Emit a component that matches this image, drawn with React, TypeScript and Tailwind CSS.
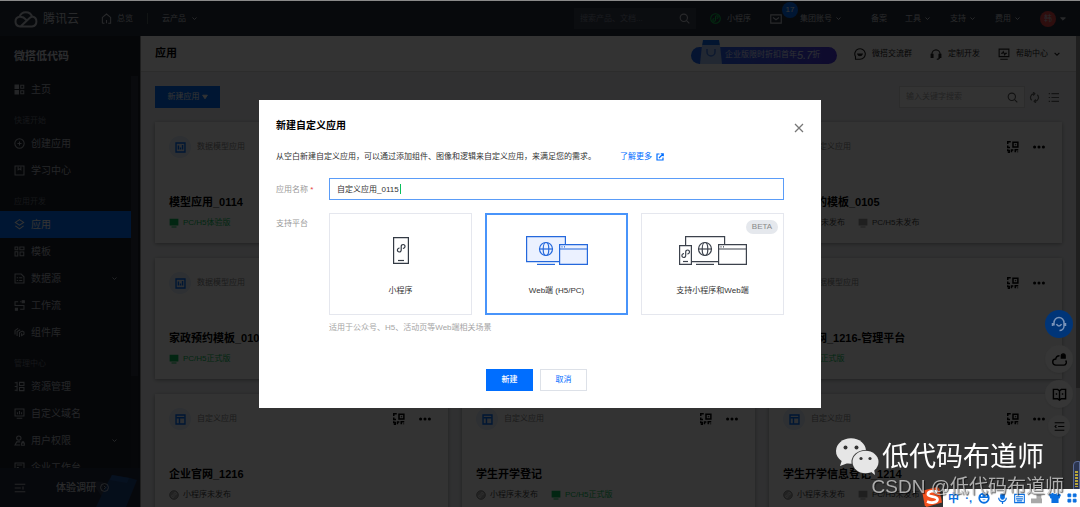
import React, { useState } from 'react';

type IconProps = { className?: string; children?: React.ReactNode; box?: string; width?: number };

function Svg({ className = 'size-3', children, box = '0 0 16 16', width = 1.5 }: IconProps) {
  return (
    <svg viewBox={box} className={`shrink-0 ${className}`} fill="none" stroke="currentColor" strokeWidth={width} aria-hidden="true">
      {children}
    </svg>
  );
}

const Chevron = ({ className = 'size-[5px]' }: { className?: string }) => (
  <Svg className={className} box="0 0 10 10" width={2}><path d="M1 3l4 4 4-4" /></Svg>
);
const SearchIcon = ({ className = 'size-[11px]' }: { className?: string }) => (
  <Svg className={className} width={1.6}><circle cx="7" cy="7" r="5.3" /><path d="M11 11l4 4" /></Svg>
);
const MiniGlyph = () => (
  <path d="M6.2 8.2a1.9 1.9 0 1 0 1.8 1.9V5.9A1.9 1.9 0 1 1 9.8 7.8" />
);

const icons: Record<string, React.ReactNode> = {
  home: <><path d="M1.5 1.5h5v5h-5zM1.5 9.5h5v5h-5z" fill="currentColor" /><path d="M9.8 1.8h4.4v4.4H9.8zM9.8 9.8h4.4v4.4H9.8z" /></>,
  plus: <><circle cx="8" cy="8" r="6.8" /><path d="M8 5v6M5 8h6" /></>,
  book: <><path d="M1.5 1.5h13v13h-13z" /><path d="M6 2v5l2-1.5L10 7V2" /></>,
  layers: <><path d="M8 1l6 4-6 4-6-4z" /><path d="M2 10l6 4.500 6-4.500" /></>,
  template: <><path d="M1.5 1.5h4v4h-4zM8.5 1.5h6v4h-6zM1.5 8.5h4v6h-4zM8.8 8.8h5.4v5.4H8.8z" /></>,
  data: <><path d="M1.5 1.5h9l4 4v9h-13z" /><path d="M4 7h2M7.5 7H12M4 11h2M7.5 11H12" /></>,
  flow: <><path d="M6 2.5H1.5V8h13v5.5H9M9 2.5h2" /><path d="M12 1h3v3h-3zM2 12h3v3H2z" fill="currentColor" /></>,
  parts: <><path d="M1.5 11V5L6 2M4.5 13V6.5L9 4M8 14.5V8l4-2 2.5 1.5v3L11 12.5V9" /></>,
  resource: <><path d="M4.500 1v14M1 2.500h3.500M1 8h3.500M1 13.500h3.500" /><path d="M8 2h6.500v4.500H8zM8 9.500h6.500V14H8z" /></>,
  domain: <><path d="M1.500 1.500h13v10h-13zM4 15h8" /><path d="M5 6v3M8 4.500V9M11 6v3" /></>,
  user: <><circle cx="7" cy="4.500" r="3.200" /><path d="M9 10H4l-2.500 4.500H9" /><path d="M11 11.500h4V15h-4zM12 11.500V10h2v1.500" /></>,
  desk: <><path d="M1.500 1.500h13v13h-13z" /><path d="M4 4.500h8M4 8h3" /></>,
};

const nav: { group?: string; items: { label: string; icon: string; active?: boolean; more?: boolean }[] }[] = [
  { items: [{ label: '主页', icon: 'home' }] },
  { group: '快速开始', items: [{ label: '创建应用', icon: 'plus' }, { label: '学习中心', icon: 'book' }] },
  {
    group: '应用开发',
    items: [
      { label: '应用', icon: 'layers', active: true },
      { label: '模板', icon: 'template' },
      { label: '数据源', icon: 'data', more: true },
      { label: '工作流', icon: 'flow' },
      { label: '组件库', icon: 'parts' },
    ],
  },
  {
    group: '管理中心',
    items: [
      { label: '资源管理', icon: 'resource' },
      { label: '自定义域名', icon: 'domain' },
      { label: '用户权限', icon: 'user', more: true },
      { label: '企业工作台', icon: 'desk' },
    ],
  },
];

type Status = { text: string; kind: 'pc' | 'pcOff' | 'mini' };
const apps: { type: string; name: string; model?: boolean; status: Status[] }[] = [
  { type: '数据模型应用', name: '模型应用_0114', model: true, status: [{ text: 'PC/H5体验版', kind: 'pc' }] },
  { type: '自定义应用', name: '自定义应用_0110', status: [{ text: '小程序未发布', kind: 'mini' }] },
  { type: '自定义应用', name: '我创建的模板_0105', status: [{ text: '小程序未发布', kind: 'mini' }, { text: 'PC/H5未发布', kind: 'pcOff' }] },
  { type: '数据模型应用', name: '家政预约模板_0104', model: true, status: [{ text: 'PC/H5正式版', kind: 'pc' }] },
  { type: '自定义应用', name: '家政预约', status: [{ text: '小程序未发布', kind: 'mini' }] },
  { type: '数据模型应用', name: '企业官网_1216-管理平台', model: true, status: [{ text: 'PC/H5正式版', kind: 'pc' }] },
  { type: '自定义应用', name: '企业官网_1216', status: [{ text: '小程序未发布', kind: 'mini' }] },
  { type: '自定义应用', name: '学生开学登记', status: [{ text: '小程序未发布', kind: 'mini' }, { text: 'PC/H5正式版', kind: 'pc' }] },
  { type: '自定义应用', name: '学生开学信息登记_1214', status: [{ text: '小程序未发布', kind: 'mini' }, { text: 'PC/H5未发布', kind: 'pcOff' }] },
];

function TopBar() {
  return (
    <header className="flex h-[35px] shrink-0 items-center bg-[#262f3e] px-3.5 text-[8px] text-[#c8ccd4]">
      <a href="#home" className="flex items-center gap-[5px] text-xs">
        <Svg className="h-[18px] w-6" box="0 0 24 18" width={2}>
          <path d="M6 16.500a4.900 4.900 0 0 1-.5-9.700A6.700 6.700 0 0 1 18.200 6.600a5 5 0 0 1-.2 9.900zM5.500 6.800c3-.3 5 1 6.800 3M6.500 16.500l7.500-7c1.500-1.500 2.500-2.500 4.500-2.900" />
        </Svg>
        腾讯云
      </a>
      <a href="#overview" className="ml-[22px] flex items-center gap-[5px]">
        <Svg className="size-[11px]"><path d="M2 15V6.500L8 1.500l6 5V15h-3.500M8 15v-5M2 15h3" /></Svg>
        总览
      </a>
      <span className="mx-3.5 h-[11px] w-px bg-[#566]" />
      <a href="#products" className="flex items-center gap-1.5">云产品<Chevron /></a>
      <label className="ml-auto flex h-[21px] w-[122px] items-center bg-[#3a4252] px-1.5">
        <input aria-label="搜索产品、文档" placeholder="搜索产品、文档..." className="w-0 flex-1 bg-transparent outline-none placeholder:text-[#80889a]" />
        <SearchIcon />
      </label>
      <a href="#mini" className="ml-3.5 flex items-center gap-1.5">
        <Svg className="size-[11px] text-[#0ad050]"><circle cx="8" cy="8" r="7" /><MiniGlyph /></Svg>
        小程序
      </a>
      <a href="#messages" aria-label="消息 17" className="relative ml-[19px]">
        <Svg className="size-3"><path d="M1 2.500h14v11H1z" /><path d="M4 6l4 3 4-3" /></Svg>
        <span className="absolute -top-[11px] left-3 flex size-4 items-center justify-center rounded-full bg-[#006eff] text-[8px] text-white">17</span>
      </a>
      <a href="#account" className="ml-[18px] flex items-center gap-1">集团账号<Chevron /></a>
      <a href="#record" className="ml-[30px]">备案</a>
      <a href="#tools" className="ml-[18px] flex items-center gap-1">工具<Chevron /></a>
      <a href="#support" className="ml-5 flex items-center gap-1">支持<Chevron /></a>
      <a href="#cost" className="ml-5 flex items-center gap-1">费用<Chevron /></a>
      <button className="ml-5 flex items-center gap-1">
        <span className="flex size-4 items-center justify-center rounded-full bg-[#e54545]">韩</span>
        <Svg className="size-[6px]" box="0 0 10 10"><path d="M1 3h8L5 7z" fill="currentColor" /></Svg>
      </button>
    </header>
  );
}

function SideBar() {
  return (
    <aside className="flex w-[140px] shrink-0 flex-col bg-[#1a1f29] text-[10px] text-[#b4b8c0]">
      <h2 className="flex h-10 shrink-0 items-center px-3.5 text-[11px] font-bold text-[#d8dce4]">微搭低代码</h2>
      <div className="flex min-h-0 flex-1">
        <nav className="min-w-0 flex-1 overflow-hidden">
          {nav.map((section, i) => (
            <div key={i}>
              {section.group && <h3 className="flex h-[27px] items-end px-3.5 pb-[3px] text-[8px] text-[#6c727e]">{section.group}</h3>}
              {section.items.map((item) => (
                <a
                  key={item.label}
                  href={`#${item.icon}`}
                  className={`flex h-[27px] items-center gap-1.5 px-3.5 ${item.active ? 'bg-[#006eff] text-white' : ''}`}
                >
                  <Svg className="size-[11px]">{icons[item.icon]}</Svg>
                  {item.label}
                  {item.more && <Chevron className="ml-auto size-[5px]" />}
                </a>
              ))}
            </div>
          ))}
        </nav>
        <div className="mr-0.5 w-[7px] bg-[#20242e]"><div className="h-[300px] bg-[#2e3442]" /></div>
      </div>
      <div className="relative flex h-[39px] shrink-0 items-center overflow-hidden bg-[#222b3f] px-3.5">
        <svg viewBox="0 0 50 39" className="absolute right-0 bottom-0 h-[39px] w-[50px]" aria-hidden="true">
          <path d="M1 13l12 1v16z" fill="#343f54" />
          <path d="M6 39L18 14l4-7 18 3 7 2-11 27z" fill="#1d4583" />
          <path d="M22 7l17 3-2 5-17-3z" fill="#22569f" />
        </svg>
        <Svg className="size-3"><path d="M1 3h14M1 13h14M1 8h8M12 6v4" /></Svg>
        <a href="#survey" className="relative ml-[30px] flex items-center gap-1 font-medium text-[#d0d4dc]">
          体验调研
          <Svg className="size-[9px]"><circle cx="8" cy="8" r="7" /><path d="M7 5l3 3-3 3" /></Svg>
        </a>
      </div>
    </aside>
  );
}

function StatusTag({ text, kind }: Status) {
  return (
    <span className={`flex items-center gap-1 ${kind === 'pc' ? 'text-[#0abf5b]' : 'text-[#444]'}`}>
      {kind === 'mini' ? (
        <Svg className="size-[10px] text-[#888]" width={1.4}><circle cx="8" cy="8" r="7" fill="#aaa" /><g stroke="#eee"><MiniGlyph /></g></Svg>
      ) : (
        <svg viewBox="0 0 16 16" className={`size-[10px] ${kind === 'pc' ? 'text-[#0abf5b]' : 'text-[#999]'}`} fill="currentColor" aria-hidden="true">
          <path d="M1 1h14v11H1zM4 13.500h8V15H4z" />
        </svg>
      )}
      {text}
    </span>
  );
}

function AppCard({ app }: { app: (typeof apps)[number] }) {
  return (
    <article className="flex h-[121px] flex-col bg-white px-3.5 pt-3.5 shadow-[0_1px_4px_rgba(0,0,0,0.35)]">
      <div className="flex items-center gap-1.5 text-[8px] text-[#888]">
        <span className="flex size-[22px] items-center justify-center rounded-full bg-[#e3edff] text-[#006eff]">
          <Svg className="size-[11px]" width={2}>
            <path d="M1.500 1.500h13v13h-13z" />
            {app.model ? <path d="M5 5v6M8 8v3M11 4.500V11" /> : <path d="M2 5.500h12M6.500 5.500V14" />}
          </Svg>
        </span>
        {app.type}
        <button aria-label="二维码" className="mr-2 ml-auto text-black">
          <Svg className="size-3" width={2}>
            <path d="M5 1H1v3M1 6v2.500h3M8 1.500h6.500V8H8zM1 11v1.500h2V15H1M6 15v-3h2.500M11 15v-3.500h4M14 14v1" />
            <path d="M11 4.500h.8v.8H11z" strokeWidth={1} />
          </Svg>
        </button>
        <button aria-label="更多" className="mr-[3px] text-black">
          <svg viewBox="0 0 15 5" className="h-1 w-3" fill="currentColor" aria-hidden="true">
            <circle cx="2" cy="2.500" r="1.900" /><circle cx="7.500" cy="2.500" r="1.900" /><circle cx="13" cy="2.500" r="1.900" />
          </svg>
        </button>
      </div>
      <h3 className="mt-9 text-[11px] leading-4 font-bold text-black">{app.name}</h3>
      <div className="mt-[7px] flex gap-[13px] text-[8px] leading-3">
        {app.status.map((s) => <StatusTag key={s.text} {...s} />)}
      </div>
    </article>
  );
}

function MainArea() {
  return (
    <main className="flex min-w-0 flex-1 border-l border-[#999] bg-[#f0f1f4]">
      <div className="flex min-w-0 flex-1 flex-col overflow-hidden">
        <div className="flex h-9 shrink-0 items-center border-b border-[#ddd] bg-white px-3.5 text-[8px] text-[#222]">
          <h1 className="text-[11px] font-bold text-black">应用</h1>
          <a href="#discount" className="relative mt-[3px] ml-auto flex h-[17px] w-[146px] items-center rounded-full bg-gradient-to-r from-[#1668f5] to-[#4a35e0] pl-[34px] text-[#dfe6ff]">
            <svg viewBox="0 0 22 24" className="absolute bottom-0 left-[9px] h-6 w-[22px]" aria-hidden="true">
              <path d="M3 0h16l1 6H2z" fill="#0a6cf0" />
              <path d="M2 5h18l2 19H0z" fill="#a9c6f7" />
              <path d="M7 9v3a4 4 0 0 0 8 0V9" fill="none" stroke="#3f7be8" strokeWidth="1.500" />
            </svg>
            企业版限时折扣首年<i className="text-[11px]">5.7</i>折
          </a>
          <a href="#group" className="ml-[17px] flex items-center gap-1.5">
            <Svg className="size-3"><path d="M2 15h6a7 7 0 1 0-6-3.500z" /><path d="M5 8c1 3 5 3 6 0z" fill="currentColor" /></Svg>
            微搭交流群
          </a>
          <a href="#custom" className="ml-[18px] flex items-center gap-1.5">
            <Svg className="size-3"><path d="M2.500 8.500a5.500 6 0 0 1 11 0M13 12c0 2-2 3-4 3" /><path d="M1.500 8.500H4v4H1.500zM12 8.500h2.500v4H12z" fill="currentColor" /></Svg>
            定制开发
          </a>
          <a href="#help" className="mr-0.5 ml-[18px] flex items-center gap-1.5">
            <Svg className="size-3"><path d="M1.500 1.500h13v10h-13zM3 15h10M4 7h2l1-2 2 4 1-2h2" /></Svg>
            帮助中心
            <Chevron className="size-[6px]" />
          </a>
        </div>
        <div className="flex shrink-0 items-center px-3.5 pt-3.5 text-[8px]">
          <button className="flex h-[22px] w-[65px] items-center justify-center gap-0.5 bg-[#006eff] text-white">
            新建应用
            <Svg className="size-[6px]" box="0 0 10 10"><path d="M1 2h8L5 8z" fill="currentColor" /></Svg>
          </button>
          <label className="ml-auto flex h-[22px] w-[126px] items-center border border-[#ddd] bg-white px-1.5 text-[#555]">
            <input aria-label="输入关键字搜索" placeholder="输入关键字搜索" className="w-0 flex-1 outline-none placeholder:text-[#aaa]" />
            <SearchIcon />
          </label>
          <button aria-label="刷新" className="ml-1 text-[#666]">
            <Svg className="size-[11px]" width={1.8}><path d="M7 2.500a5.500 5.500 0 0 0-3 9.500M9 13.500a5.500 5.500 0 0 0 3-9.500M6 0l2.500 2.500L6 5M10 11l-2.500 2.500L10 16" /></Svg>
          </button>
          <button aria-label="列表" className="mr-[3px] ml-2 text-[#666]">
            <Svg className="size-[11px]" width={1.8}><path d="M1 2.500h2M5 2.500h11M1 8h2M5 8h11M1 13.500h2M5 13.500h11" /></Svg>
          </button>
        </div>
        <div className="grid shrink-0 grid-cols-3 gap-x-3.5 gap-y-[15px] px-3.5 pt-3.5">
          {apps.map((app) => <AppCard key={app.name} app={app} />)}
        </div>
      </div>
      <div className="w-1 bg-[#d8d8d8]"><div className="h-[352px] bg-[#9a9a9a]" /></div>
    </main>
  );
}

const Globe = ({ cx, cy }: { cx: number; cy: number }) => (
  <g><circle cx={cx} cy={cy} r="6.500" /><ellipse cx={cx} cy={cy} rx="2.800" ry="6.500" /><path d={`M${cx - 6.5} ${cy}h13`} /></g>
);
const Phone = ({ tall }: { tall?: boolean }) => (
  <g>
    <path d={tall ? 'M.6 .6h14.800v25.800H.6z' : 'M.6 9.600h11.800v18.800H.6z'} fill="white" />
    <path d={tall ? 'M5 23.500h6' : 'M4 25.500h5'} />
    <path transform={tall ? 'translate(0 3)' : 'translate(-1.500 9.500)'} d="M6.500 8.200a1.900 1.900 0 1 0 1.700 1.900V6.400a1.900 1.900 0 1 1 1.700 1.900" />
  </g>
);

function PlatformArt({ kind }: { kind: string }) {
  if (kind === 'mini') return <Svg className="h-[28px] w-[16px] text-[#333a44]" box="0 0 16 28" width={1.2}><Phone tall /></Svg>;
  if (kind === 'web')
    return (
      <Svg className="h-[30px] w-[62px] text-[#2468dc]" box="0 0 62 30" width={1.2}>
        <path d="M.6 .6h38.800v25H.6z" fill="#ebf1ff" /><path d="M11 28.400h18" /><Globe cx={20} cy={13} />
        <path d="M33.600 8.600h27.800v19.800H33.600z" fill="#ebf1ff" /><path d="M33.600 13h27.800M35.500 10.800h1M38 10.800h1" />
      </Svg>
    );
  return (
    <Svg className="h-[30px] w-[68px] text-[#3c424c]" box="0 0 68 30" width={1.2}>
      <path d="M6.600 .6h39v25h-39z" fill="white" /><path d="M17 28.400h18" /><Globe cx={26} cy={13} /><Phone />
      <path d="M39.600 8.600h27.800v19.800H39.600z" fill="white" /><path d="M39.600 13h27.800M41.500 10.800h1M44 10.800h1" />
    </Svg>
  );
}

const platforms = [
  { id: 'mini', label: '小程序' },
  { id: 'web', label: 'Web端 (H5/PC)' },
  { id: 'both', label: '支持小程序和Web端', beta: true },
];

function CreateDialog() {
  const [name, setName] = useState('自定义应用_0115');
  const [platform, setPlatform] = useState('web');
  return (
    <div className="fixed inset-0 flex items-center justify-center bg-black/80">
      <form role="dialog" aria-labelledby="dialog-title" className="w-[562px] bg-white px-[17px] py-[17px] text-[8px] text-[#333]">
        <div className="flex justify-between">
          <h2 id="dialog-title" className="text-[10px] leading-[18px] font-bold text-black">新建自定义应用</h2>
          <button type="button" aria-label="关闭" className="mt-1 text-[#777]">
            <Svg className="size-[10px]" box="0 0 10 10" width={1.3}><path d="M1 1l8 8M9 1L1 9" /></Svg>
          </button>
        </div>
        <p className="mt-3.5 flex items-center gap-6 leading-4">
          从空白新建自定义应用，可以通过添加组件、图像和逻辑来自定义应用，来满足您的需求。
          <a href="#more" className="flex items-center gap-1 text-[#006eff]">
            了解更多
            <Svg className="size-2" width={2.4}><path d="M7 2H2v12h12V9M9.500 1.500h5v5M14 2L6 10" /></Svg>
          </a>
        </p>
        <div className="mt-[13px] grid grid-cols-[53px_1fr] pr-5">
          <label htmlFor="app-name" className="pt-1 leading-4 text-[#999]">应用名称 <span className="text-[#e54545]">*</span></label>
          <div className="relative">
            <input
              id="app-name"
              value={name}
              onChange={(e) => setName(e.target.value)}
              className="block h-[22px] w-full border border-[#5a9cf8] px-[7px] text-[#333] caret-[#0abf5b] outline-none"
            />
            <span className="absolute top-1.5 left-[71px] h-2.5 w-px bg-[#0abf5b]" />
          </div>
          <span id="platform-label" className="mt-[13px] pt-[3px] leading-4 text-[#999]">支持平台</span>
          <div className="mt-[13px]">
            <div role="radiogroup" aria-labelledby="platform-label" className="grid grid-cols-3 gap-[13px]">
              {platforms.map((p) => (
                <label
                  key={p.id}
                  className={`relative flex h-[102px] flex-col items-center ${platform === p.id ? 'border-2 border-[#4894fa] pt-[21px]' : 'border border-[#e5e7ee] pt-[22px]'}`}
                >
                  <input type="radio" name="platform" value={p.id} checked={platform === p.id} onChange={() => setPlatform(p.id)} className="sr-only" />
                  <span className="flex h-[30px] items-center"><PlatformArt kind={p.id} /></span>
                  <span className="mt-[17px] leading-4">{p.label}</span>
                  {p.beta && <span className="absolute top-1.5 right-[5px] flex h-3.5 w-8 items-center justify-center rounded-full bg-[#e5e8ed] text-[8px] text-[#888]">BETA</span>}
                </label>
              ))}
            </div>
            <p className="mt-[5px] leading-4 text-[#a5a5a5]">适用于公众号、H5、活动页等Web端相关场景</p>
          </div>
        </div>
        <div className="mt-[33px] flex justify-center gap-[7px] pr-[7px]">
          <button type="submit" className="h-[22px] w-[47px] bg-[#006eff] font-medium text-white">新建</button>
          <button type="button" className="h-[22px] w-[47px] border border-[#dde1e8] text-[#006eff]">取消</button>
        </div>
      </form>
    </div>
  );
}

function FloatingTools() {
  return (
    <div className="fixed top-[310px] right-[7px] flex flex-col items-center gap-[7px] text-black">
      <button aria-label="客服" className="flex size-7 items-center justify-center rounded-full bg-[#003578] text-[#7892b8]">
        <Svg className="size-4"><path d="M3 9.500V7a5 5.500 0 0 1 10 0v3c0 2.500-2 4.500-4.500 4.500M1.500 7v3M14.500 7v3M5.500 8c1 2.500 4 2.500 5 0" /></Svg>
      </button>
      <button aria-label="通知" className="flex size-7 items-center justify-center rounded-full bg-[#363636] shadow">
        <Svg className="size-[15px]"><path d="M8 4a4 4 0 0 0-4 3.500A3.200 3.200 0 0 0 4 14h8a3 3 0 0 0 2.500-5" /><path d="M10 6.500V4a2 2 0 0 1 4 0v2.500z" fill="currentColor" /></Svg>
      </button>
      <button aria-label="文档" className="flex size-7 items-center justify-center rounded-full bg-[#363636] shadow">
        <Svg className="size-[15px]"><path d="M1.500 2.500H6L8 4l2-1.500h4.500v10H10L8 14l-2-1.500H1.500zM8 4v10M4 7.500h1.500M10.500 7.500H12" /></Svg>
      </button>
      <button aria-label="收起" className="flex size-[22px] items-center justify-center rounded-full bg-[#363636] shadow">
        <Svg className="size-[11px]"><path d="M1 2.500h14M6 8h9M1 13.500h14M3.500 6L1.500 8l2 2" /></Svg>
      </button>
    </div>
  );
}

function InputMethodBar() {
  return (
    <div className="fixed right-0 bottom-0 flex h-[18px] w-[137px] items-center justify-between bg-white pr-[3px] pl-[5px] text-[#0a6fe0]">
      <svg viewBox="0 0 22 22" className="absolute bottom-0 -left-[22px] h-5 w-[22px]" aria-hidden="true">
        <path d="M0 4L17 0l2 2 3 15-17 5-2-2z" fill="#f4511e" />
        <path d="M17 5.500C13 3.500 6.500 4.500 6.500 8S17 9.500 17 13.500 10 18 5.500 16" fill="none" stroke="white" strokeWidth="3" />
      </svg>
      <span className="text-[11px] font-bold">中</span>
      <span className="text-[11px] font-bold">·,</span>
      <Svg className="size-3" width={2}><circle cx="8" cy="8" r="7.500" fill="currentColor" stroke="none" /><path d="M4 9c1 4 7 4 8 0zM5 4v2M11 4v2" stroke="white" /></Svg>
      <Svg className="size-[11px]" width={1.800}><rect x="5.500" y="1" width="5" height="8" rx="2.500" fill="currentColor" /><path d="M2.500 7a5.500 5.500 0 0 0 11 0M8 12.500V16" /></Svg>
      <Svg className="size-[11px]" width={1.600}><path d="M1 2h14v12H1zM3 5.500h10M3 8.500h10M4 11.500h8" /></Svg>
      <Svg className="size-[11px] text-[#a8a8a8]" width={2}><path d="M1 9h14v5H1zM9 3h5v4H9z" fill="currentColor" /></Svg>
      <Svg className="size-3"><path d="M1 4l4-2c1 2 5 2 6 0l4 2-1.500 4H12v6H4V8H2.500z" fill="currentColor" /></Svg>
      <Svg className="size-[10px]"><path d="M1.500 1.500h4.500v4.500H1.500zM10 1.500h4.500v4.500H10zM1.500 10h4.500v4.500H1.500zM10 10h4.500v4.500H10z" fill="currentColor" /></Svg>
    </div>
  );
}

function Watermarks() {
  return (
    <div className="pointer-events-none fixed right-4 bottom-2 flex w-[228px] flex-col font-['Liberation_Sans','Noto_Sans_CJK_SC',sans-serif]">
      <div className="flex items-center gap-[3px] text-[27px] leading-9 text-white">
        <svg viewBox="0 0 43 37" className="h-[37px] w-[43px] shrink-0" aria-hidden="true">
          <g fill="#e6e6e6">
            <ellipse cx="15" cy="13" rx="15" ry="12.800" /><path d="M6 22l-2 6 8-3z" />
          </g>
          <ellipse cx="29.500" cy="24" rx="14" ry="12" fill="#333" />
          <g fill="#e6e6e6">
            <ellipse cx="29.500" cy="24" rx="13" ry="11.200" /><path d="M34 33l5 4-1-6z" />
          </g>
          <g fill="#333"><circle cx="9.500" cy="9.500" r="2" /><circle cx="20.500" cy="9.500" r="2" /><circle cx="25" cy="20.500" r="1.600" /><circle cx="34" cy="20.500" r="1.600" /></g>
        </svg>
        <span className="whitespace-nowrap">低代码布道师</span>
      </div>
      <span className="self-end text-[19px] leading-6 whitespace-nowrap text-[#c4c4c4]/85 [text-shadow:1px_1px_1px_rgba(0,0,0,0.6)]">CSDN @低代码布道师</span>
    </div>
  );
}

export default function App() {
  return (
    <div className="flex h-screen flex-col overflow-hidden border-t border-[#8a8a8a] font-['Liberation_Sans','Noto_Sans_CJK_SC',sans-serif] text-[8px]">
      <TopBar />
      <div className="flex min-h-0 flex-1">
        <SideBar />
        <MainArea />
      </div>
      <CreateDialog />
      <div className="fixed inset-x-0 top-0 h-px bg-[#8a8a8a]" />
      <FloatingTools />
      <div className="fixed right-0 bottom-[17px] flex h-[29px] w-[7px] items-end justify-center rounded-tl border border-[#5a6a96] bg-[#2b3550] pb-0.5">
        <span className="h-4 w-[3px] bg-[repeating-linear-gradient(#b8a53a_0_2px,#2b3550_2px_3px)]" />
      </div>
      <InputMethodBar />
      <Watermarks />
    </div>
  );
}
